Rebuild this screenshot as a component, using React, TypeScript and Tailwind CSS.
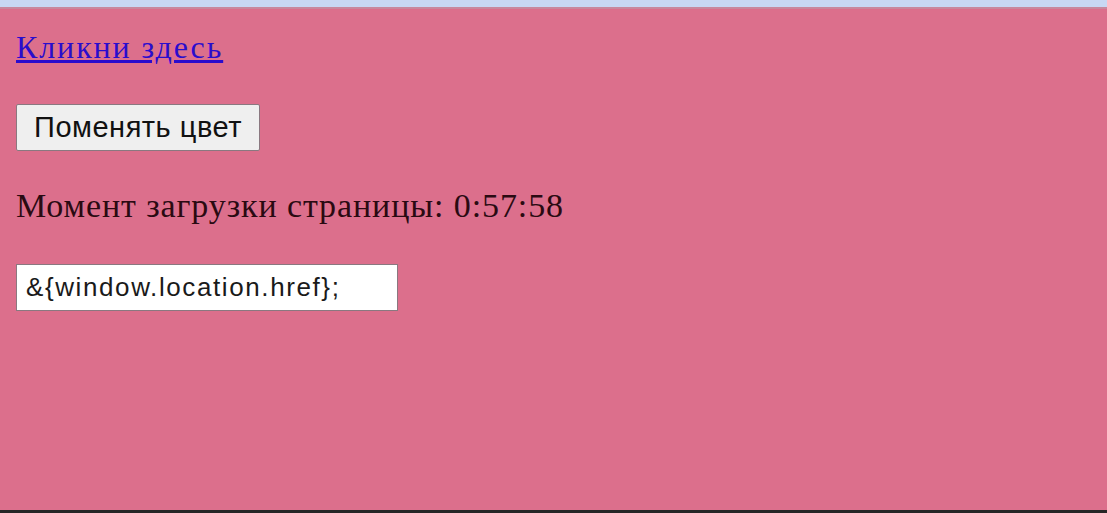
export default function App() {
  return (
    <div className="flex h-[513px] w-[1107px] flex-col overflow-hidden bg-[#dc6f8c]">
      <div className="h-[7px] shrink-0 bg-[#c8d8f4]" />
      <div className="h-[2px] shrink-0 bg-[#c8889e]" />
      <div className="flex flex-1 flex-col items-start px-[16px] pt-[20px]" style={{ fontFamily: '"Liberation Serif", serif' }}>
        <a href="#" className="text-[32px] leading-[36px] tracking-[1.9px] text-[#2a0ccd] underline decoration-[#2a0ccd]">
          Кликни здесь
        </a>
        <button
          className="mt-[39px] h-[47px] w-[244px] rounded-[2px] border border-[#8a7880] bg-[#efefef] text-[29px] tracking-[0.5px] text-[#111]"
          style={{ fontFamily: '"Liberation Sans", sans-serif' }}
        >
          Поменять цвет
        </button>
        <p className="mt-[35px] text-[34px] leading-[40px] tracking-[0.9px] text-[#2a0a12]">Момент загрузки страницы: 0:57:58</p>
        <input
          readOnly
          value="&{window.location.href};"
          className="mt-[38px] h-[47px] w-[382px] border border-[#8a7880] bg-white px-[9px] text-[26px] tracking-[1.6px] text-[#1a1a1a] outline-none"
          style={{ fontFamily: '"Liberation Sans", sans-serif' }}
        />
      </div>
      <div className="h-[3px] shrink-0 bg-[#262626]" />
    </div>
  );
}
